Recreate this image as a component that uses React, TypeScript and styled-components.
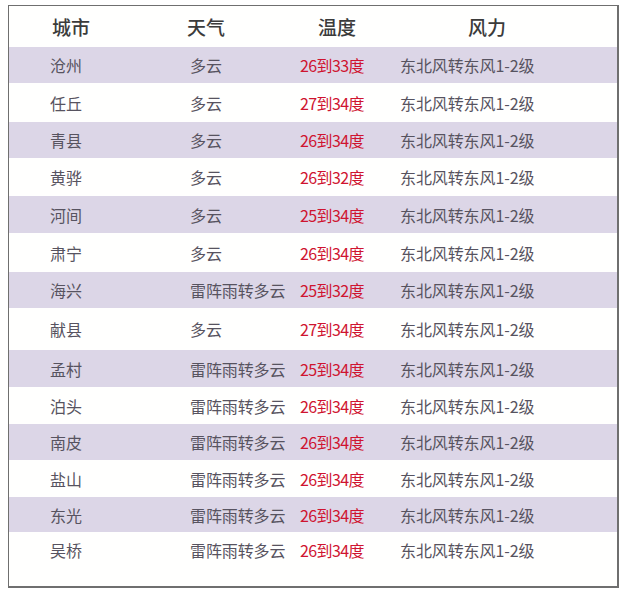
import React from "react";
import styled, { createGlobalStyle } from "styled-components";

const GlobalStyle = createGlobalStyle`
  html, body {
    margin: 0;
    padding: 0;
    background: #ffffff;
  }
  body {
    font-family: "Noto Sans CJK SC", "Noto Sans", sans-serif;
  }
`;

type Row = {
  city: string;
  weather: string;
  temp: string;
  wind: string;
  h: number;
};

const rows: Row[] = [
  { city: "沧州", weather: "多云", temp: "26到33度", wind: "东北风转东风1-2级", h: 36 },
  { city: "任丘", weather: "多云", temp: "27到34度", wind: "东北风转东风1-2级", h: 39 },
  { city: "青县", weather: "多云", temp: "26到34度", wind: "东北风转东风1-2级", h: 36 },
  { city: "黄骅", weather: "多云", temp: "26到32度", wind: "东北风转东风1-2级", h: 38 },
  { city: "河间", weather: "多云", temp: "25到34度", wind: "东北风转东风1-2级", h: 37 },
  { city: "肃宁", weather: "多云", temp: "26到34度", wind: "东北风转东风1-2级", h: 39 },
  { city: "海兴", weather: "雷阵雨转多云", temp: "25到32度", wind: "东北风转东风1-2级", h: 36 },
  { city: "献县", weather: "多云", temp: "27到34度", wind: "东北风转东风1-2级", h: 42 },
  { city: "孟村", weather: "雷阵雨转多云", temp: "25到34度", wind: "东北风转东风1-2级", h: 37 },
  { city: "泊头", weather: "雷阵雨转多云", temp: "26到34度", wind: "东北风转东风1-2级", h: 37 },
  { city: "南皮", weather: "雷阵雨转多云", temp: "26到34度", wind: "东北风转东风1-2级", h: 36 },
  { city: "盐山", weather: "雷阵雨转多云", temp: "26到34度", wind: "东北风转东风1-2级", h: 37 },
  { city: "东光", weather: "雷阵雨转多云", temp: "26到34度", wind: "东北风转东风1-2级", h: 35 },
  { city: "吴桥", weather: "雷阵雨转多云", temp: "26到34度", wind: "东北风转东风1-2级", h: 36 },
];

const columns = "140px 110px 100px 1fr";

export default function App() {
  return (
    <>
      <GlobalStyle />
      <Page>
        <Frame>
          <HeadRow>
            <HeadCell $shift={2}>城市</HeadCell>
            <HeadCell $shift={-3}>天气</HeadCell>
            <HeadCell $shift={18}>温度</HeadCell>
            <HeadCell $shift={68}>风力</HeadCell>
          </HeadRow>
          {rows.map((r, i) => (
            <BodyRow key={r.city} $striped={i % 2 === 0} $height={r.h}>
              <Cell>{r.city}</Cell>
              <Cell>{r.weather}</Cell>
              <Temp>{r.temp}</Temp>
              <Cell>{r.wind}</Cell>
            </BodyRow>
          ))}
        </Frame>
      </Page>
    </>
  );
}

const Page = styled.div`
  width: 626px;
  height: 591px;
  padding: 5px 0 0 8px;
  box-sizing: border-box;
`;

const Frame = styled.div`
  width: 611px;
  height: 583px;
  box-sizing: border-box;
  border: 1px solid #6f6f6f;
  border-right-width: 2px;
  border-bottom-width: 2px;
  background: #fffffe;
  display: flex;
  flex-direction: column;
`;

const HeadRow = styled.div`
  display: grid;
  grid-template-columns: ${columns};
  align-items: center;
  height: 41px;
  padding-left: 41px;
`;

const HeadCell = styled.div<{ $shift: number }>`
  margin-left: ${(p) => p.$shift}px;
  font-size: 19px;
  font-weight: 500;
  color: #3b3b3b;
  white-space: nowrap;
`;

const BodyRow = styled.div<{ $striped: boolean; $height: number }>`
  display: grid;
  grid-template-columns: ${columns};
  align-items: center;
  height: ${(p) => p.$height}px;
  padding-left: 41px;
  background: ${(p) => (p.$striped ? "#dcd6e7" : "transparent")};
`;

const Cell = styled.div`
  font-size: 16px;
  color: #575360;
  white-space: nowrap;
  letter-spacing: -0.1px;
`;

const Temp = styled(Cell)`
  color: #cf1430;
  letter-spacing: -0.6px;
`;
